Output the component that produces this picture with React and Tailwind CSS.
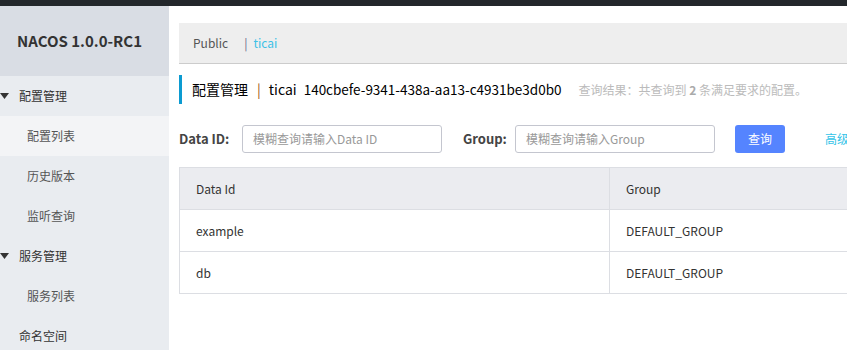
import { ChevronDown } from "lucide-react";

const font = { fontFamily: '"Noto Sans CJK SC", "Noto Sans", sans-serif' };

const menu = [
  { label: "配置管理", group: true },
  { label: "配置列表", active: true },
  { label: "历史版本" },
  { label: "监听查询" },
  { label: "服务管理", group: true },
  { label: "服务列表" },
  { label: "命名空间", top: true },
];

const rows = [
  { id: "example", group: "DEFAULT_GROUP" },
  { id: "db", group: "DEFAULT_GROUP" },
];

function Caret() {
  return (
    <svg width="9" height="6" viewBox="0 0 9 6" className="shrink-0">
      <path d="M0 0 L9 0 L4.5 6 Z" fill="#333" />
    </svg>
  );
}

export default function App() {
  return (
    <div
      className="w-[847px] h-[350px] overflow-hidden bg-white flex flex-col text-[#333]"
      style={font}
    >
      {/* top bar */}
      <div className="h-[6px] bg-[#23272b] shrink-0" />

      <div className="flex flex-1 min-h-0">
        {/* sidebar */}
        <aside className="w-[169px] shrink-0 bg-[#e9ecf0] flex flex-col overflow-hidden">
          <div className="h-[70px] shrink-0 bg-[#d9dde4] flex items-center pl-[17px] text-[15px] font-bold text-[#333]">
            NACOS 1.0.0-RC1
          </div>
          {menu.map((m) => (
            <div
              key={m.label}
              className={`h-[40px] shrink-0 flex items-center text-[12px] ${
                m.active ? "bg-[#f3f4f6]" : ""
              } ${m.group ? "pl-0" : m.top ? "pl-[19px]" : "pl-[27px]"}`}
            >
              {m.group && (
                <span className="w-[19px] flex items-center">
                  <Caret />
                </span>
              )}
              <span className={m.group || m.top ? "text-[#333]" : "text-[#555]"}>
                {m.label}
              </span>
            </div>
          ))}
        </aside>

        {/* main */}
        <main className="flex-1 min-w-0 pl-[10px] pt-[17px] overflow-hidden">
          <div className="h-[41px] bg-[#eeeeee] border-b border-[#cccccc] flex items-center pl-[14px] text-[12px] whitespace-nowrap">
            <span className="text-[#555]">Public</span>
            <span className="ml-[16px] text-[#666688]">|</span>
            <span className="ml-[6px] text-[#3ec1e6]">ticai</span>
          </div>

          <div className="mt-[11px] h-[29px] border-l-[3px] border-[#0c9bd1] flex items-center pl-[10px] whitespace-nowrap">
            <span className="text-[14px] text-black shrink-0">配置管理</span>
            <span className="text-[14px] text-[#a0550c] ml-[9px] mr-[8px] shrink-0">|</span>
            <span className="text-[14px] text-black shrink-0">ticai</span>
            <span className="text-[13.5px] text-black ml-[7px] shrink-0">
              140cbefe-9341-438a-aa13-c4931be3d0b0
            </span>
            <span className="text-[12px] text-[#bbbbbb] ml-[17px] shrink-0">
              查询结果：共查询到 <b className="font-bold text-[#aaa]">2</b> 条满足要求的配置。
            </span>
          </div>

          <div className="mt-[21px] h-[28px] flex items-center whitespace-nowrap">
            <span className="w-[63px] shrink-0 text-[13px] font-bold text-[#444]">Data ID:</span>
            <div className="w-[200px] shrink-0 h-[28px] border border-[#c4c6cf] rounded-[3px] flex items-center pl-[10px] text-[12px] text-[#999]">
              模糊查询请输入Data ID
            </div>
            <span className="ml-[21px] w-[52px] shrink-0 text-[13px] font-bold text-[#444]">Group:</span>
            <div className="w-[200px] shrink-0 h-[28px] border border-[#c4c6cf] rounded-[3px] flex items-center pl-[10px] text-[12px] text-[#999]">
              模糊查询请输入Group
            </div>
            <button className="ml-[20px] w-[50px] shrink-0 h-[28px] rounded-[3px] bg-[#5584ff] text-white text-[12px]">
              查询
            </button>
            <span className="ml-[40px] shrink-0 text-[12px] text-[#33c3e8] flex items-center">
              高级查询
              <ChevronDown size={12} />
            </span>
          </div>

          <table className="mt-[14px] w-[700px] border-collapse text-[12px] text-[#333]">
            <thead>
              <tr className="h-[42px] bg-[#ebecf0]">
                <th className="w-[430px] border border-[#dcdee3] text-left font-normal pl-[16px]">
                  Data Id
                </th>
                <th className="border border-[#dcdee3] text-left font-normal pl-[16px]">
                  Group
                </th>
              </tr>
            </thead>
            <tbody>
              {rows.map((r) => (
                <tr key={r.id} className="h-[42px]">
                  <td className="border border-[#dcdee3] pl-[16px]">{r.id}</td>
                  <td className="border border-[#dcdee3] pl-[16px]">{r.group}</td>
                </tr>
              ))}
            </tbody>
          </table>
        </main>
      </div>
    </div>
  );
}
